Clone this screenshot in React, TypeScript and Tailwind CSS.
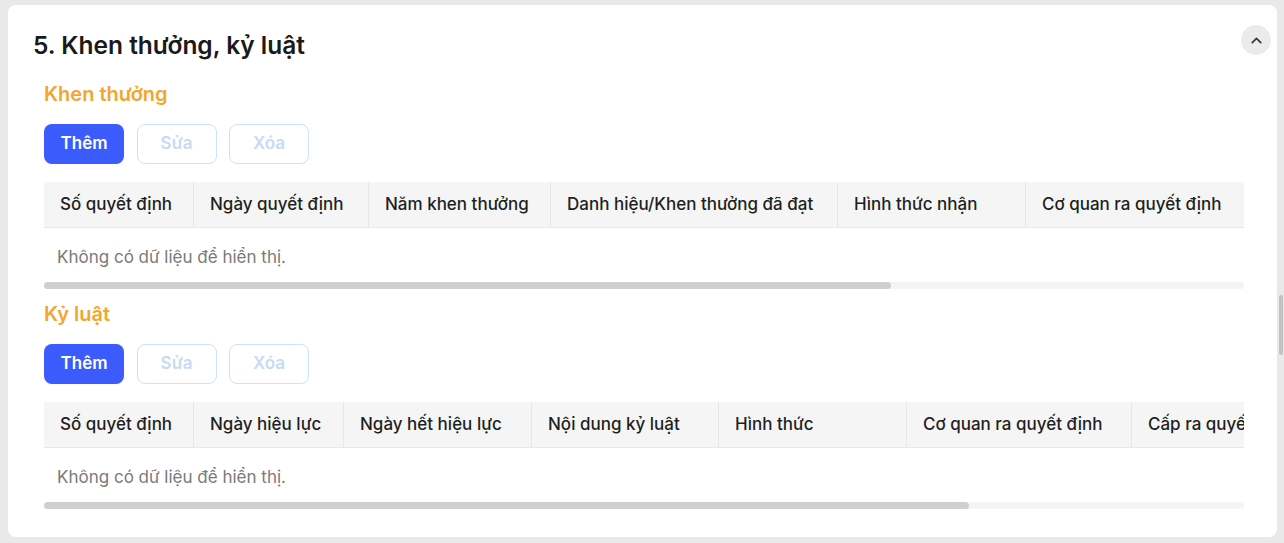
import { ChevronUp } from "lucide-react";

type Column = { title: string; width: number };

const rewardColumns: Column[] = [
  { title: "Số quyết định", width: 149 },
  { title: "Ngày quyết định", width: 175 },
  { title: "Năm khen thưởng", width: 182 },
  { title: "Danh hiệu/Khen thưởng đã đạt", width: 287 },
  { title: "Hình thức nhận", width: 188 },
  { title: "Cơ quan ra quyết định", width: 230 },
  { title: "Cấp ra quyết định", width: 200 },
  { title: "Ghi chú", width: 200 },
];

const disciplineColumns: Column[] = [
  { title: "Số quyết định", width: 149 },
  { title: "Ngày hiệu lực", width: 150 },
  { title: "Ngày hết hiệu lực", width: 188 },
  { title: "Nội dung kỷ luật", width: 187 },
  { title: "Hình thức", width: 188 },
  { title: "Cơ quan ra quyết định", width: 225 },
  { title: "Cấp ra quyết định", width: 200 },
];

const ActionButtons = () => (
  <div className="flex gap-[12.5px]">
    <button className="h-10 w-20 rounded-lg bg-[#3b5bfd] text-[17px] font-semibold text-white">
      Thêm
    </button>
    <button
      disabled
      className="h-10 w-20 rounded-lg border border-[#cfe1f7] bg-white text-[17px] font-semibold text-[#c6dbf4]"
    >
      Sửa
    </button>
    <button
      disabled
      className="h-10 w-20 rounded-lg border border-[#cfe1f7] bg-white text-[17px] font-semibold text-[#c6dbf4]"
    >
      Xóa
    </button>
  </div>
);

type EmptyTableProps = {
  columns: Column[];
  thumbWidth: number;
};

const EmptyTable = ({ columns, thumbWidth }: EmptyTableProps) => (
  <div className="mt-[18px]">
    <div className="overflow-hidden">
      <div className="flex h-[46px] w-max border-b border-[#e8e8e8] bg-[#f5f5f5]">
        {columns.map((col, i) => (
          <div
            key={col.title}
            style={{ width: col.width }}
            className={`flex shrink-0 items-center whitespace-nowrap px-4 text-[17px] font-medium text-[#1f1f1f] ${
              i > 0 ? "border-l border-[#e6e6e6]" : ""
            }`}
          >
            {col.title}
          </div>
        ))}
      </div>
      <div className="flex h-[54px] items-center px-[13px] pt-[6px] text-[17px] text-[#7a7a7a]">
        Không có dữ liệu để hiển thị.
      </div>
    </div>
    <div className="h-[7px] rounded-full bg-[#f4f4f4]">
      <div
        style={{ width: thumbWidth }}
        className="h-full rounded-full bg-[#cfcfcf]"
      />
    </div>
  </div>
);

export default function App() {
  return (
    <div
      className="relative h-[543px] overflow-hidden bg-[#e9e9e9] pl-2 pr-[7px] pt-[5px]"
      style={{ fontFamily: "Inter, 'Noto Sans', sans-serif" }}
    >
      <div className="relative h-[532px] rounded-lg bg-white pt-[25px]">
        <button className="absolute right-[6px] top-5 flex h-[30px] w-[30px] items-center justify-center rounded-full bg-[#ebebeb] text-[#3a3a3a]">
          <ChevronUp size={17} strokeWidth={2.5} />
        </button>

        <h2 className="pl-[25px] text-[24.5px] font-semibold leading-[30px] text-[#1a1a1a]">
          5. Khen thưởng, kỷ luật
        </h2>

        <div className="pl-9 pr-[33px]">
          <h3 className="mt-[22px] text-[20px] font-semibold leading-6 text-[#f2a531]">
            Khen thưởng
          </h3>
          <div className="mt-[18px]">
            <ActionButtons />
          </div>
          <EmptyTable columns={rewardColumns} thumbWidth={847} />

          <h3 className="mt-[13px] text-[20px] font-semibold leading-6 text-[#f2a531]">
            Kỷ luật
          </h3>
          <div className="mt-[18px]">
            <ActionButtons />
          </div>
          <EmptyTable columns={disciplineColumns} thumbWidth={925} />
        </div>
      </div>

      <div className="absolute right-[1px] top-[295px] h-[60px] w-[4px] rounded-sm bg-[#c2c2c2]" />
    </div>
  );
}
